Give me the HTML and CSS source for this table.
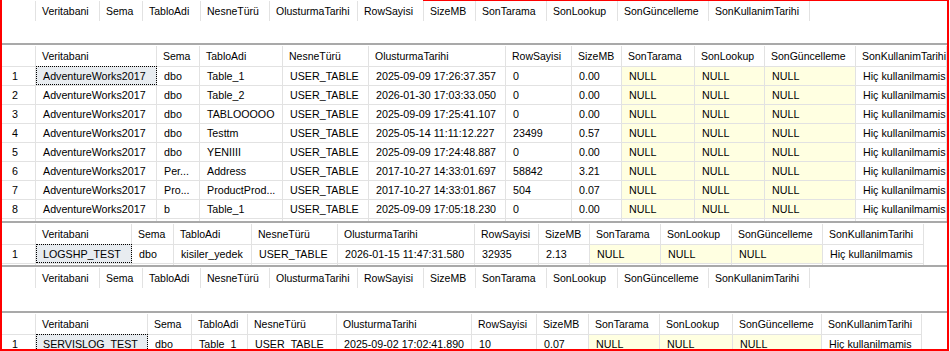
FILE: index.html
```html
<!DOCTYPE html>
<html lang="tr">
<head>
  <meta charset="UTF-8" />
  <title>Sonuçlar</title>
  <link rel="stylesheet" href="styles.css">
</head>
<body>

  <div class="frame">
    <!-- bos sonuc -->
    <div class="result r-empty first">
      <div class="row head">
        <span></span><span>Veritabani</span><span>Sema</span><span>TabloAdi</span><span>NesneTürü</span><span>OlusturmaTarihi</span><span>RowSayisi</span><span>SizeMB</span><span>SonTarama</span><span>SonLookup</span><span>SonGüncelleme</span><span>SonKullanimTarihi</span>
      </div>
    </div>

    <!-- AdventureWorks2017 -->
    <div class="result r-main">
      <div class="row head">
        <span></span><span>Veritabani</span><span>Sema</span><span>TabloAdi</span><span>NesneTürü</span><span>OlusturmaTarihi</span><span>RowSayisi</span><span>SizeMB</span><span>SonTarama</span><span>SonLookup</span><span>SonGüncelleme</span><span>SonKullanimTarihi</span>
      </div>
      <div class="row data">
        <span class="n">1</span><span class="sel">AdventureWorks2017</span><span>dbo</span><span>Table_1</span><span>USER_TABLE</span><span>2025-09-09 17:26:37.357</span><span>0</span><span>0.00</span><span class="null">NULL</span><span class="null">NULL</span><span class="null">NULL</span><span>Hiç kullanilmamis</span>
      </div>
      <div class="row data">
        <span class="n">2</span><span>AdventureWorks2017</span><span>dbo</span><span>Table_2</span><span>USER_TABLE</span><span>2026-01-30 17:03:33.050</span><span>0</span><span>0.00</span><span class="null">NULL</span><span class="null">NULL</span><span class="null">NULL</span><span>Hiç kullanilmamis</span>
      </div>
      <div class="row data">
        <span class="n">3</span><span>AdventureWorks2017</span><span>dbo</span><span>TABLOOOOO</span><span>USER_TABLE</span><span>2025-09-09 17:25:41.107</span><span>0</span><span>0.00</span><span class="null">NULL</span><span class="null">NULL</span><span class="null">NULL</span><span>Hiç kullanilmamis</span>
      </div>
      <div class="row data">
        <span class="n">4</span><span>AdventureWorks2017</span><span>dbo</span><span>Testtm</span><span>USER_TABLE</span><span>2025-05-14 11:11:12.227</span><span>23499</span><span>0.57</span><span class="null">NULL</span><span class="null">NULL</span><span class="null">NULL</span><span>Hiç kullanilmamis</span>
      </div>
      <div class="row data">
        <span class="n">5</span><span>AdventureWorks2017</span><span>dbo</span><span>YENIIII</span><span>USER_TABLE</span><span>2025-09-09 17:24:48.887</span><span>0</span><span>0.00</span><span class="null">NULL</span><span class="null">NULL</span><span class="null">NULL</span><span>Hiç kullanilmamis</span>
      </div>
      <div class="row data">
        <span class="n">6</span><span>AdventureWorks2017</span><span>Per...</span><span>Address</span><span>USER_TABLE</span><span>2017-10-27 14:33:01.697</span><span>58842</span><span>3.21</span><span class="null">NULL</span><span class="null">NULL</span><span class="null">NULL</span><span>Hiç kullanilmamis</span>
      </div>
      <div class="row data">
        <span class="n">7</span><span>AdventureWorks2017</span><span>Pro...</span><span>ProductProd...</span><span>USER_TABLE</span><span>2017-10-27 14:33:01.867</span><span>504</span><span>0.07</span><span class="null">NULL</span><span class="null">NULL</span><span class="null">NULL</span><span>Hiç kullanilmamis</span>
      </div>
      <div class="row data">
        <span class="n">8</span><span>AdventureWorks2017</span><span>b</span><span>Table_1</span><span>USER_TABLE</span><span>2025-09-09 17:05:18.230</span><span>0</span><span>0.00</span><span class="null">NULL</span><span class="null">NULL</span><span class="null">NULL</span><span>Hiç kullanilmamis</span>
      </div>
      <div class="row data">
        <span></span><span></span><span></span><span></span><span></span><span></span><span></span><span></span><span></span><span></span><span></span><span></span>
      </div>
    </div>

    <!-- LOGSHP_TEST -->
    <div class="result r-log">
      <div class="row head">
        <span></span><span>Veritabani</span><span>Sema</span><span>TabloAdi</span><span>NesneTürü</span><span>OlusturmaTarihi</span><span>RowSayisi</span><span>SizeMB</span><span>SonTarama</span><span>SonLookup</span><span>SonGüncelleme</span><span>SonKullanimTarihi</span>
      </div>
      <div class="row data">
        <span class="n">1</span><span class="sel">LOGSHP_TEST</span><span>dbo</span><span>kisiler_yedek</span><span>USER_TABLE</span><span>2026-01-15 11:47:31.580</span><span>32935</span><span>2.13</span><span class="null">NULL</span><span class="null">NULL</span><span class="null">NULL</span><span>Hiç kullanilmamis</span>
      </div>
      <div class="row data">
        <span></span><span></span><span></span><span></span><span></span><span></span><span></span><span></span><span></span><span></span><span></span><span></span>
      </div>
    </div>

    <!-- bos sonuc -->
    <div class="result r-empty tall">
      <div class="row head">
        <span></span><span>Veritabani</span><span>Sema</span><span>TabloAdi</span><span>NesneTürü</span><span>OlusturmaTarihi</span><span>RowSayisi</span><span>SizeMB</span><span>SonTarama</span><span>SonLookup</span><span>SonGüncelleme</span><span>SonKullanimTarihi</span>
      </div>
    </div>

    <!-- SERVISLOG_TEST -->
    <div class="result r-servis">
      <div class="row head">
        <span></span><span>Veritabani</span><span>Sema</span><span>TabloAdi</span><span>NesneTürü</span><span>OlusturmaTarihi</span><span>RowSayisi</span><span>SizeMB</span><span>SonTarama</span><span>SonLookup</span><span>SonGüncelleme</span><span>SonKullanimTarihi</span>
      </div>
      <div class="row data">
        <span class="n">1</span><span class="sel">SERVISLOG_TEST</span><span>dbo</span><span>Table_1</span><span>USER_TABLE</span><span>2025-09-02 17:02:41.890</span><span>10</span><span>0.07</span><span class="null">NULL</span><span class="null">NULL</span><span class="null">NULL</span><span>Hiç kullanilmamis</span>
      </div>
    </div>
  </div>

</body>
</html>
```

FILE: styles.css
```css
:root {
  --grid-line: #e2e2e2;
  --splitter: #a9a9a9;
  --mark: #ff0000;
  --null-bg: #ffffe1;
  --sel-bg: #e8ecf0;
}

* {
  margin: 0;
  padding: 0;
  box-sizing: border-box;
}

html,
body {
  width: 100%;
  height: 100%;
  overflow: hidden;
  background: #ffffff;
  font-family: 'Liberation Sans', Arial, sans-serif;
  font-size: 10.7px;
  color: #000000;
}

.frame {
  position: relative;
  width: 949px;
  height: 351px;
  padding-top: 1px;
  border-left: 2px solid var(--mark);
  border-right: 2px solid var(--mark);
  border-bottom: 2px solid var(--mark);
  display: flex;
  flex-direction: column;
  overflow: hidden;
}

/* kirmizi cizginin ust kismi sadece sagda */
.frame::before {
  content: '';
  position: absolute;
  top: 0;
  left: 421px;
  right: 0;
  height: 1px;
  background: var(--mark);
}

.result {
  flex: none;
  overflow: hidden;
  padding-top: 1px;
  border-bottom: 2px solid var(--splitter);
  background: #ffffff;
}

.result.first {
  padding-top: 0;
  height: 44px;
}

.result.tall {
  height: 46px;
}

.r-main {
  height: 178px;
}

.r-log {
  height: 44px;
}

.r-servis {
  height: 36px;
  border-bottom: none;
}

.row {
  display: grid;
  height: 19px;
}

.row.head {
  height: 20px;
}

.r-empty .row {
  grid-template-columns: 34px 64px 43px 58px 69px 88px 66px 52px 71px 71px 91px 101px;
}

.r-main .row {
  grid-template-columns: 34px 121px 43px 83px 86px 137px 66px 50px 73px 70px 91px 91px;
}

.r-log .row {
  grid-template-columns: 34px 96px 42px 78px 86px 137px 64px 51px 71px 71px 91px 101px;
}

.r-servis .row {
  grid-template-columns: 34px 112px 44px 56px 89px 135px 65px 52px 71px 73px 89px 100px;
}

.row span {
  display: block;
  overflow: hidden;
  white-space: nowrap;
  border-right: 1px solid var(--grid-line);
}

.head span {
  padding-left: 6px;
  line-height: 20px;
  font-size: 10.5px;
}

.data span {
  padding-left: 7px;
  line-height: 18px;
  border-top: 1px solid var(--grid-line);
}

.data span.n {
  padding-left: 10px;
}

.data span.null {
  background: var(--null-bg);
}

.data span.sel {
  background: var(--sel-bg);
  outline: 1px dotted #000000;
  outline-offset: -1px;
}
```
